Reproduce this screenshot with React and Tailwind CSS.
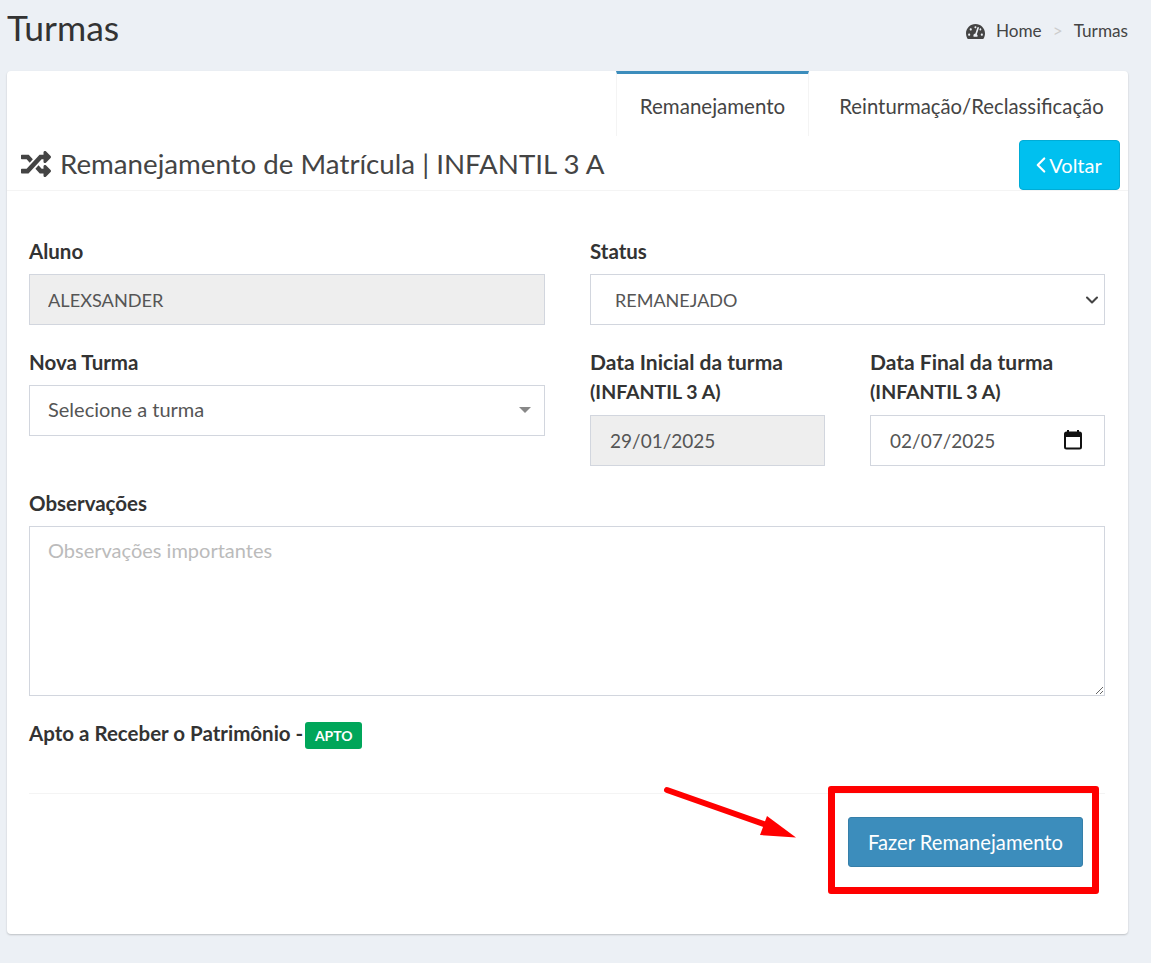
import { FaRandom, FaTachometerAlt } from "react-icons/fa";
import { ChevronDown, ChevronLeft } from "lucide-react";

const fieldBase =
  "block w-full h-[51px] border border-[#d2d6de] text-[#555] outline-none rounded-none";

const Label = ({ children }) => (
  <label className="block mb-[8px] text-[20.5px] leading-[30px] font-bold text-[#333] whitespace-nowrap">
    {children}
  </label>
);

const CalendarIcon = () => (
  <svg width="18" height="20" viewBox="0 0 18 20" className="absolute right-[23px] top-[15px]">
    <path d="M4 0v3M14 0v3" stroke="#111" strokeWidth="2" />
    <rect x="1" y="2.5" width="16" height="16" rx="1.5" fill="none" stroke="#111" strokeWidth="2" />
    <rect x="1" y="3" width="16" height="4" fill="#111" />
  </svg>
);

export default function App() {
  return (
    <div className="relative min-h-[963px] bg-[#ecf0f5] pl-[7px] pr-[23px] text-[#444] font-['Lato','Liberation_Sans',sans-serif] overflow-hidden">
      {/* Page header */}
      <div className="flex items-start justify-between h-[71px]">
        <h1 className="mt-[6px] text-[35.5px] leading-[44px] text-[#333]">Turmas</h1>
        <div className="flex items-center mt-[19px] text-[17.2px] leading-6 text-[#444]">
          <FaTachometerAlt size={19} className="mr-[11px]" />
          <span>Home</span>
          <span className="mx-[11px] text-[#ccc]">&gt;</span>
          <span>Turmas</span>
        </div>
      </div>

      {/* Card */}
      <div className="h-[863px] bg-white rounded-[4px] shadow-[0_1px_2px_rgba(0,0,0,0.2)]">
        {/* Tabs */}
        <div className="flex justify-end h-[65px]">
          <div className="flex items-center justify-center w-[193px] border-t-[3px] border-[#3c8dbc] border-x border-x-[#f4f4f4] text-[20.5px] text-[#444] pt-[2px]">
            Remanejamento
          </div>
          <div className="flex items-center justify-center w-[319px] text-[20.3px] text-[#444] pt-[5px] pl-[6px]">
            Reinturmação/Reclassificação
          </div>
        </div>

        {/* Title */}
        <div className="flex items-start justify-between h-[55px] border-b border-[#f4f4f4] pl-[14px] pr-[8px]">
          <h3 className="flex items-center h-[50px] mt-[3px] text-[27.7px] text-[#444]">
            <FaRandom size={30} className="mr-[9px] -mt-[1px] text-[#444]" />
            Remanejamento de Matrícula | INFANTIL 3 A
          </h3>
          <button className="flex items-center justify-center w-[101px] h-[50px] mt-[4px] pr-[3px] pb-[1px] rounded-[4px] bg-[#00c0ef] border border-[#00acd6] text-white text-[20px]">
            <ChevronLeft size={26} strokeWidth={2} className="-ml-[6px] -mr-[5px]" />
            Voltar
          </button>
        </div>

        {/* Form */}
        <div className="px-[22px] pt-[45px]">
          <div className="grid grid-cols-[516px_515px] gap-x-[45px]">
            <div>
              <Label>Aluno</Label>
              <input
                readOnly
                value="ALEXSANDER"
                className={`${fieldBase} bg-[#eee] px-[18px] text-[18.2px]`}
              />
            </div>
            <div>
              <Label>Status</Label>
              <div className="relative">
                <select className={`${fieldBase} appearance-none bg-white px-[24px] pt-[1px] text-[18px]`} defaultValue="r">
                  <option value="r">REMANEJADO</option>
                </select>
                <ChevronDown size={20} strokeWidth={2.5} className="absolute right-[3px] top-[16px] text-[#444]" />
              </div>
            </div>

            <div className="mt-[22px]">
              <Label>Nova Turma</Label>
              <div className="relative">
                <div className={`${fieldBase} flex items-center bg-white px-[18px] pb-[3px] text-[20px] text-[#444]`}>
                  Selecione a turma
                </div>
                <span className="absolute right-[14px] top-[22px] border-x-[6px] border-x-transparent border-t-[6px] border-t-[#888]" />
              </div>
            </div>
            <div className="mt-[22px] grid grid-cols-[235px_235px] gap-x-[45px]">
              <div>
                <Label>
                  <span className="block text-[21px]">Data Inicial da turma</span>
                  <span className="block text-[19.5px]">(INFANTIL 3 A)</span>
                </Label>
                <input readOnly value="29/01/2025" className={`${fieldBase} bg-[#eee] px-[19px] text-[19px]`} />
              </div>
              <div>
                <Label>
                  <span className="block text-[21px]">Data Final da turma</span>
                  <span className="block text-[19.5px]">(INFANTIL 3 A)</span>
                </Label>
                <div className="relative">
                  <input readOnly value="02/07/2025" className={`${fieldBase} bg-white px-[19px] text-[19px]`} />
                  <CalendarIcon />
                </div>
              </div>
            </div>
          </div>

          <div className="mt-[22px]">
            <Label>Observações</Label>
            <textarea
              placeholder="Observações importantes"
              className="block w-[1076px] h-[170px] border border-[#d2d6de] px-[18px] py-[8px] text-[20px] leading-[30px] text-[#555] placeholder:text-[#bbb] outline-none"
            />
          </div>

          <div className="flex items-start mt-[22px] h-[30px] text-[20.5px] leading-[30px] font-bold text-[#333]">
            Apto a Receber o Patrimônio -
            <span className="ml-[2px] mt-[4px] flex items-center justify-center w-[57px] h-[27px] rounded-[3px] bg-[#00a65a] text-white text-[14px] leading-none font-bold">
              APTO
            </span>
          </div>

          <hr className="mt-[45px] w-[1076px] border-t border-[#f4f4f4]" />

          <div className="flex justify-end w-[1054px] mt-[23px]">
            <button className="w-[235px] h-[50px] rounded-[3px] bg-[#3c8dbc] border border-[#367fa9] text-white text-[20.2px]">
              Fazer Remanejamento
            </button>
          </div>
        </div>
      </div>

      {/* Annotation drawn over the screenshot */}
      <div className="absolute left-[828px] top-[786px] w-[271px] h-[108px] border-[7px] border-[#ff0000] rounded-[3px]" />
      <svg className="absolute left-0 top-0 pointer-events-none" width="1151" height="963">
        <line x1="667" y1="790" x2="772" y2="827" stroke="#ff0000" strokeWidth="6" strokeLinecap="round" />
        <polygon points="767,816 796,837.5 760,835" fill="#ff0000" />
      </svg>
    </div>
  );
}
